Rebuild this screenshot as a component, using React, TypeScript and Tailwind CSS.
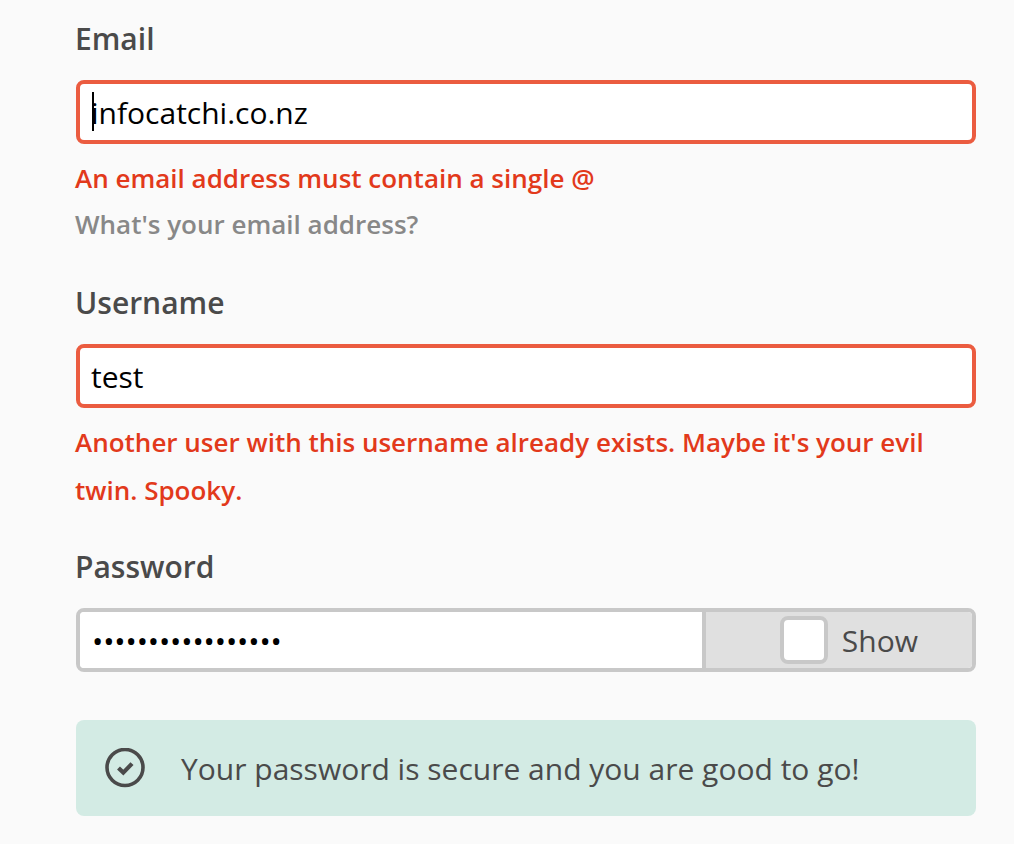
export default function App() {
  return (
    <div className="min-h-[844px] bg-[#fafafa] pl-[76px] pr-[38px] pt-[19px] font-['Open_Sans',sans-serif] text-[30px] text-[#4a4a4a] overflow-hidden">
      <label className="block -ml-px h-[40px] leading-[40px] mb-[21px] font-semibold">Email</label>
      <div className="relative">
        <input readOnly value="infocatchi.co.nz" className="block w-full h-[64px] bg-white border-4 border-[#eb5c40] rounded-lg pl-[11px] pr-3 text-black outline-none" />
        <span className="absolute left-[16px] top-[12px] w-[2px] h-[39px] bg-black" />
      </div>
      <p className="-ml-px mt-[10px] h-[48px] leading-[48px] text-[26px] font-semibold text-[#e2391b]">An email address must contain a single @</p>
      <p className="-ml-px h-[44px] leading-[44px] text-[26px] font-semibold text-[#888888]">What's your email address?</p>

      <label className="block -ml-px mt-[37px] h-[40px] leading-[40px] mb-[21px] font-semibold">Username</label>
      <input readOnly value="test" className="block w-full h-[64px] bg-white border-4 border-[#eb5c40] rounded-lg pl-[11px] pr-3 text-black outline-none" />
      <p className="-ml-px mt-[10px] leading-[48px] text-[26px] font-semibold text-[#e2391b]">Another user with this username already exists. Maybe it's your evil twin. Spooky.</p>

      <label className="block -ml-px mt-[33px] h-[40px] leading-[40px] mb-[21px] font-semibold">Password</label>
      <div className="flex h-[64px] border-4 border-[#c8c8c8] rounded-lg overflow-hidden">
        <input readOnly type="password" value="fakepassword12345" className="flex-1 min-w-0 bg-white px-3 tracking-[-0.12px] text-black outline-none" />
        <div className="w-[270px] shrink-0 flex items-center justify-end gap-[14px] pr-[54px] bg-[#e0e0e0] border-l-4 border-[#c8c8c8]">
          <span className="w-[48px] h-[48px] bg-white border-4 border-[#c8c8c8] rounded-lg" />
          <span>Show</span>
        </div>
      </div>

      <div className="mt-[48px] h-[96px] flex items-center bg-[#d3ebe4] rounded-lg">
        <svg viewBox="0 0 40 40" className="ml-[29px] w-[40px] h-[40px] shrink-0" fill="none" stroke="#4a4a4a">
          <circle cx="20" cy="19.5" r="18" strokeWidth="3.6" />
          <path d="M13.5 20l4.8 4.6 8.7-9" strokeWidth="4.2" />
        </svg>
        <span className="ml-[36px]">Your password is secure and you are good to go!</span>
      </div>
    </div>
  );
}
